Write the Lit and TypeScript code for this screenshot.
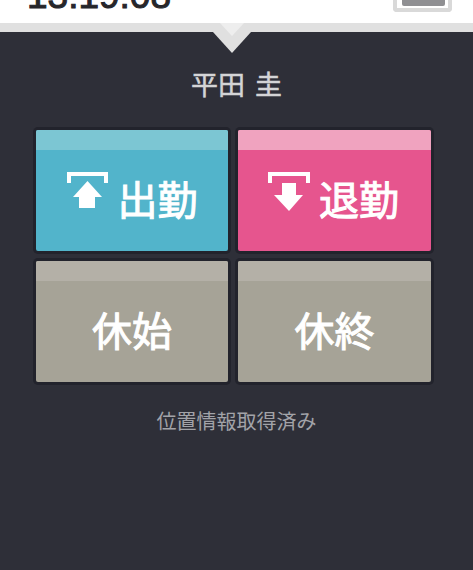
import { LitElement, html, css, svg } from "lit";
import { customElement } from "lit/decorators.js";

const upIcon = svg`<path d="M0 11V0H41V11H37V4H4V11z" fill="#fff"/><path d="M20.500 9 35 25H28V36H12V25H6z" fill="#fff"/>`;
const downIcon = svg`<path d="M0 11V0H42V11H38V4H4V11z" fill="#fff"/><path d="M14 11H28V23H35L21 39 6 23H14z" fill="#fff"/>`;

@customElement("app-root")
export class AppRoot extends LitElement {
  static styles = css`
    :host {
      display: block;
      width: 473px;
      height: 570px;
      position: relative;
      overflow: hidden;
      background: #2e2f38;
      font-family: "Noto Sans CJK JP", "Noto Sans", sans-serif;
    }
    .top {
      height: 23px;
      background: #fff;
      overflow: hidden;
      display: flex;
      justify-content: space-between;
      align-items: flex-end;
      padding: 0 21px 0 27px;
    }
    .time {
      font: 400 37px/37px "Liberation Sans", Arial, sans-serif;
      color: #26262a;
      margin-bottom: 9px;
      -webkit-text-stroke: 1px #26262a;
    }
    .cal {
      width: 59px;
      height: 30px;
      box-sizing: border-box;
      border: 4px solid #d9d9d9;
      border-top: 0;
      border-radius: 0 0 4px 4px;
      margin-bottom: 11px;
      background: #fff;
      padding: 0 3px 2px 5px;
      display: flex;
    }
    .cal i {
      flex: 1;
      background: #8f8f92;
      border-radius: 0 0 2px 2px;
    }
    .band {
      height: 9px;
      background: #e0e0e0;
    }
    .notch {
      position: absolute;
      left: 211px;
      top: 23px;
      width: 42px;
      height: 31px;
    }
    .name {
      margin-top: 33px;
      text-align: center;
      color: #d4d4d6;
      font-size: 27px;
      line-height: 38px;
      word-spacing: 4px;
      -webkit-text-stroke: 0.5px #d4d4d6;
    }
    .grid {
      margin: 27px 0 0 36px;
      width: 395px;
      display: grid;
      grid-template-columns: 192px 193px;
      grid-auto-rows: 121px;
      gap: 10px;
    }
    .btn {
      border-radius: 2px;
      box-shadow: 0 0 0 3px #22232c;
      display: flex;
      align-items: center;
      justify-content: center;
      position: relative;
      color: #fff;
      font-size: 40px;
      padding-top: 14px;
      box-sizing: border-box;
      -webkit-text-stroke: 1px #fff;
    }
    .btn::before {
      content: "";
      position: absolute;
      left: 0;
      right: 0;
      top: 0;
      height: 20px;
      border-radius: 2px 2px 0 0;
    }
    .in { background: #52b4cb; }
    .in::before { background: #7cc6d3; }
    .out { background: #e6558e; }
    .out::before { background: #f0a3bf; }
    .rest { background: #a6a397; }
    .rest::before { background: #b4b0a7; }
    .ico-up {
      width: 41px;
      height: 36px;
      flex: none;
      margin: -15px 10px 0 0;
    }
    .ico-down {
      width: 42px;
      height: 39px;
      flex: none;
      margin: -12px 9px 0 -2px;
    }
    .lbl {
      line-height: 44px;
      position: relative;
    }
    .status {
      margin-top: 26px;
      text-align: center;
      color: #a2a3a8;
      font-size: 20px;
      line-height: 26px;
    }
  `;

  render() {
    return html`
      <div class="top">
        <div class="time">13:19:08</div>
        <div class="cal"><i></i></div>
      </div>
      <div class="band"></div>
      <svg class="notch" viewBox="0 0 42 31">
        <path d="M2 0H40V9L21 30 2 9z" fill="#e0e0e0" />
        <path d="M9 0H33L21 13z" fill="#eeeeee" />
      </svg>
      <div class="name">平田 圭</div>
      <div class="grid">
        <div class="btn in"><svg class="ico-up" viewBox="0 0 41 36">${upIcon}</svg><span class="lbl">出勤</span></div>
        <div class="btn out"><svg class="ico-down" viewBox="0 0 42 39">${downIcon}</svg><span class="lbl">退勤</span></div>
        <div class="btn rest"><span class="lbl">休始</span></div>
        <div class="btn rest"><span class="lbl">休終</span></div>
      </div>
      <div class="status">位置情報取得済み</div>
    `;
  }
}
